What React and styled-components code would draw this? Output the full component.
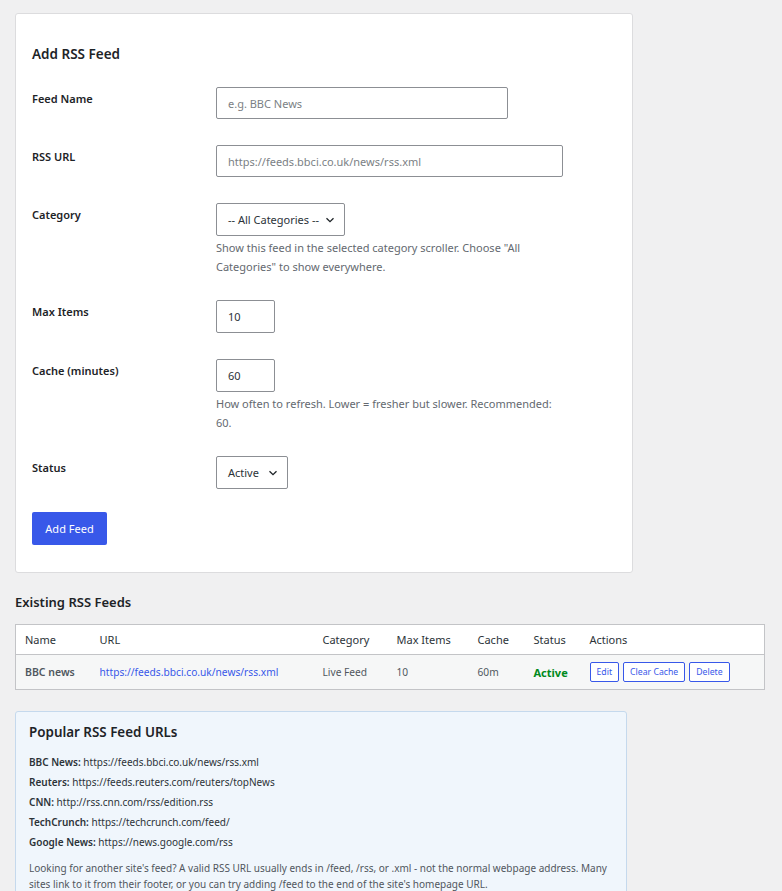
import React from "react";
import styled, { createGlobalStyle } from "styled-components";

const Global = createGlobalStyle`
  html, body { margin: 0; padding: 0; background: #f0f0f1; }
  body { font-family: "Noto Sans", "Open Sans", sans-serif; color: #1d2327; }
  * { box-sizing: border-box; }
`;

const Page = styled.div`
  padding: 13px 0 40px 15px;
`;

const Card = styled.section`
  width: 618px;
  background: #fff;
  border: 1px solid #dcdcde;
  border-radius: 3px;
  padding: 30px 16px 27px 16px;
`;

const CardTitle = styled.h2`
  margin: 0 0 10px 0;
  font-size: 13.5px;
  line-height: 20px;
  font-weight: 600;
`;

const Row = styled.div`
  display: grid;
  grid-template-columns: 184px 1fr;
  padding: 13px 0;
`;

const Label = styled.label`
  font-size: 11px;
  font-weight: 600;
  line-height: 20px;
  padding-top: 2px;
`;

const Field = styled.div`
  display: flex;
  flex-direction: column;
  align-items: flex-start;
`;

const TextInput = styled.input`
  width: ${(p) => p.$w}px;
  height: ${(p) => p.$h || 32}px;
  border: 1px solid #8c8f94;
  border-radius: 2px;
  padding: 0 11px;
  font-family: inherit;
  font-size: 11px;
  color: #2c3338;
  background: #fff;
  &::placeholder { color: #7b7f85; }
`;

const SelectBox = styled.div`
  width: ${(p) => p.$w}px;
  height: 33px;
  border: 1px solid #8c8f94;
  border-radius: 2px;
  padding: 0 0 0 11px;
  display: flex;
  align-items: center;
  justify-content: space-between;
  white-space: nowrap;
  font-size: 11px;
  color: #2c3338;
  background: #fff;
`;

const Chevron = styled.svg`
  flex: none;
  width: 10px;
  height: 10px;
  margin-right: ${(p) => p.$mr}px;
`;

const Desc = styled.p`
  margin: 3px 0 -2px 0;
  max-width: 345px;
  font-size: 11px;
  line-height: 18.5px;
  color: #646970;
`;

const PrimaryButton = styled.button`
  margin-top: 10px;
  width: 75px;
  height: 33px;
  border: 0;
  border-radius: 2px;
  background: #3858e9;
  color: #fff;
  font-family: inherit;
  font-size: 11px;
`;

const SectionTitle = styled.h2`
  margin: 19px 0 12px 0;
  font-size: 13px;
  line-height: 20px;
  font-weight: 600;
`;

const Table = styled.table`
  width: 750px;
  border-collapse: collapse;
  table-layout: fixed;
  border: 1px solid #c3c4c7;
  background: #fff;
`;

const Th = styled.th`
  width: ${(p) => p.$w}px;
  height: 30px;
  padding: 0 9px;
  text-align: left;
  font-weight: 400;
  font-size: 11px;
  color: #2c3338;
  border-bottom: 1px solid #c3c4c7;
`;

const BodyRow = styled.tr`
  background: #f6f7f7;
`;

const Td = styled.td`
  height: 35px;
  padding: 0 9px;
  font-size: ${(p) => (p.$bold ? 10.5 : 10.2)}px;
  color: #50575e;
  font-weight: ${(p) => (p.$bold ? 600 : 400)};
`;

const Link = styled.a`
  color: #3858e9;
  text-decoration: none;
`;

const StatusText = styled.span`
  color: #008a20;
  font-weight: 700;
  font-size: 11px;
`;

const Actions = styled.div`
  display: flex;
  gap: 4px;
`;

const SmallButton = styled.button`
  height: 20px;
  padding: 0 6px;
  background: #fff;
  border: 1px solid #3858e9;
  border-radius: 2px;
  color: #3858e9;
  font-family: inherit;
  font-size: 8.7px;
`;

const InfoBox = styled.section`
  margin-top: 21px;
  width: 612px;
  background: #f0f6fc;
  border: 1px solid #c5d9ed;
  border-radius: 3px;
  padding: 10px 13px 12px 13px;
`;

const InfoTitle = styled.h3`
  margin: 0 0 10px 0;
  font-size: 13.4px;
  line-height: 20px;
  font-weight: 600;
`;

const FeedLine = styled.div`
  font-size: 10px;
  line-height: 20px;
  color: #2c3338;
  b { font-weight: 600; }
`;

const InfoNote = styled.p`
  margin: 8px 0 0 0;
  font-size: 10px;
  line-height: 16px;
  color: #50575e;
`;

const Caret = ({ mr }) => (
  <Chevron $mr={mr} viewBox="0 0 10 10">
    <path d="M1.5 3.2 L5 6.7 L8.5 3.2" fill="none" stroke="#1d2327" strokeWidth="1.3" />
  </Chevron>
);

const popular = [
  ["BBC News:", "https://feeds.bbci.co.uk/news/rss.xml"],
  ["Reuters:", "https://feeds.reuters.com/reuters/topNews"],
  ["CNN:", "http://rss.cnn.com/rss/edition.rss"],
  ["TechCrunch:", "https://techcrunch.com/feed/"],
  ["Google News:", "https://news.google.com/rss"],
];

export default function App() {
  return (
    <Page>
      <Global />
      <Card>
        <CardTitle>Add RSS Feed</CardTitle>
        <Row>
          <Label>Feed Name</Label>
          <Field>
            <TextInput $w={292} placeholder="e.g. BBC News" />
          </Field>
        </Row>
        <Row>
          <Label>RSS URL</Label>
          <Field>
            <TextInput $w={347} placeholder="https://feeds.bbci.co.uk/news/rss.xml" />
          </Field>
        </Row>
        <Row>
          <Label>Category</Label>
          <Field>
            <SelectBox $w={129}>
              -- All Categories --
              <Caret mr={9} />
            </SelectBox>
            <Desc>
              Show this feed in the selected category scroller. Choose "All
              Categories" to show everywhere.
            </Desc>
          </Field>
        </Row>
        <Row>
          <Label>Max Items</Label>
          <Field>
            <TextInput $w={59} $h={33} defaultValue="10" />
          </Field>
        </Row>
        <Row>
          <Label>Cache (minutes)</Label>
          <Field>
            <TextInput $w={59} $h={33} defaultValue="60" />
            <Desc>How often to refresh. Lower = fresher but slower. Recommended: 60.</Desc>
          </Field>
        </Row>
        <Row>
          <Label>Status</Label>
          <Field>
            <SelectBox $w={72}>
              Active
              <Caret mr={9} />
            </SelectBox>
          </Field>
        </Row>
        <PrimaryButton>Add Feed</PrimaryButton>
      </Card>

      <SectionTitle>Existing RSS Feeds</SectionTitle>
      <Table>
        <thead>
          <tr>
            <Th $w={75}>Name</Th>
            <Th $w={223}>URL</Th>
            <Th $w={74}>Category</Th>
            <Th $w={81}>Max Items</Th>
            <Th $w={56}>Cache</Th>
            <Th $w={56}>Status</Th>
            <Th>Actions</Th>
          </tr>
        </thead>
        <tbody>
          <BodyRow>
            <Td $bold>BBC news</Td>
            <Td>
              <Link href="#">https://feeds.bbci.co.uk/news/rss.xml</Link>
            </Td>
            <Td>Live Feed</Td>
            <Td>10</Td>
            <Td>60m</Td>
            <Td>
              <StatusText>Active</StatusText>
            </Td>
            <Td>
              <Actions>
                <SmallButton>Edit</SmallButton>
                <SmallButton>Clear Cache</SmallButton>
                <SmallButton>Delete</SmallButton>
              </Actions>
            </Td>
          </BodyRow>
        </tbody>
      </Table>

      <InfoBox>
        <InfoTitle>Popular RSS Feed URLs</InfoTitle>
        {popular.map(([name, url]) => (
          <FeedLine key={name}>
            <b>{name}</b> {url}
          </FeedLine>
        ))}
        <InfoNote>
          Looking for another site's feed? A valid RSS URL usually ends in /feed, /rss, or .xml - not the
          normal webpage address. Many sites link to it from their footer, or you can try adding /feed to
          the end of the site's homepage URL.
        </InfoNote>
      </InfoBox>
    </Page>
  );
}
